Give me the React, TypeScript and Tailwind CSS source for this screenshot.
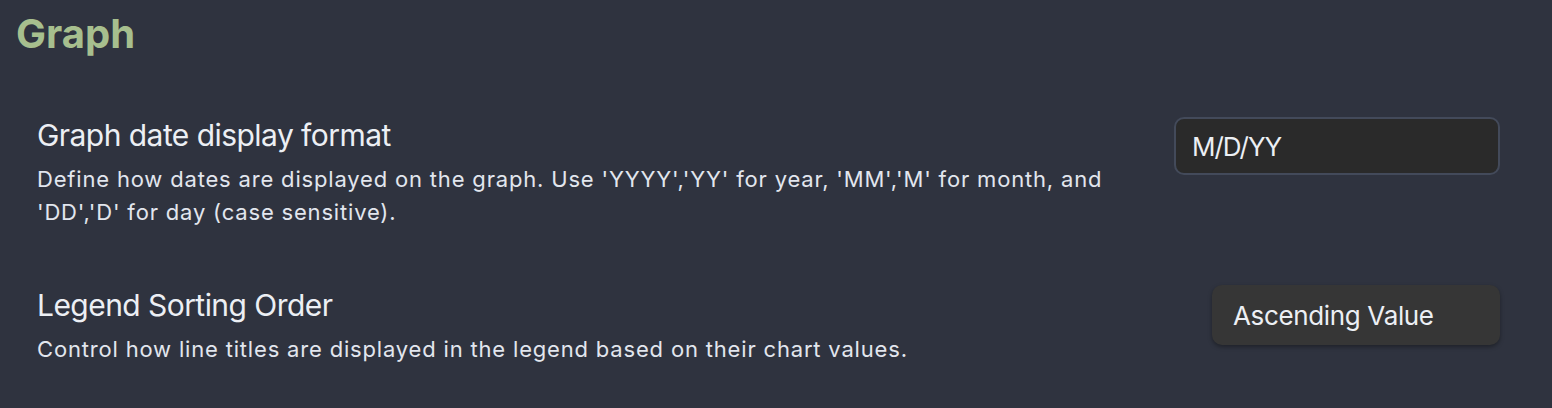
import React from 'react'

const FONT = { fontFamily: 'Inter, "Noto Sans", "Liberation Sans", sans-serif' }

interface SettingItemProps {
  name: string
  lines: string[]
  control: React.ReactNode
  className?: string
}

function SettingItem({ name, lines, control, className = '' }: SettingItemProps) {
  return (
    <div className={`flex items-start justify-between pl-[37px] pr-[52px] ${className}`}>
      <div className="flex flex-col">
        <div className="text-[30px] leading-[39px] tracking-[-0.55px] text-[#eceff4]">{name}</div>
        <div className="mt-[8px] text-[22px] leading-[33px] tracking-[0.82px] text-[#e2e6ee]">
          {lines.map((line, i) => (
            <div key={i} className="whitespace-nowrap">
              {line}
            </div>
          ))}
        </div>
      </div>
      {control}
    </div>
  )
}

export default function App() {
  return (
    <div style={FONT} className="w-[1552px] h-[408px] overflow-hidden bg-[#2f333f]">
      <h2 className="pl-[16px] pt-[10px] text-[40px] leading-[48px] font-bold text-[#a7bf8e]">Graph</h2>

      <SettingItem
        className="mt-[58px]"
        name="Graph date display format"
        lines={[
          "Define how dates are displayed on the graph. Use 'YYYY','YY' for year, 'MM','M' for month, and",
          "'DD','D' for day (case sensitive).",
        ]}
        control={
          <input
            type="text"
            defaultValue="M/D/YY"
            style={FONT}
            className="mt-[1px] w-[326px] h-[58px] rounded-[10px] border-2 border-[#434a5a] bg-[#2a2a2a] px-[16px] text-[26px] tracking-[-1px] text-[#eceff4] outline-none"
          />
        }
      />

      <SettingItem
        className="mt-[57px]"
        name="Legend Sorting Order"
        lines={['Control how line titles are displayed in the legend based on their chart values.']}
        control={
          <div className="-mt-[1px] flex h-[60px] w-[288px] items-center rounded-[10px] bg-[#363636] pl-[21px] text-[26px] tracking-[-0.35px] text-[#eceff4] shadow-[0_2px_4px_rgba(0,0,0,0.35)]">
            Ascending Value
          </div>
        }
      />
    </div>
  )
}
